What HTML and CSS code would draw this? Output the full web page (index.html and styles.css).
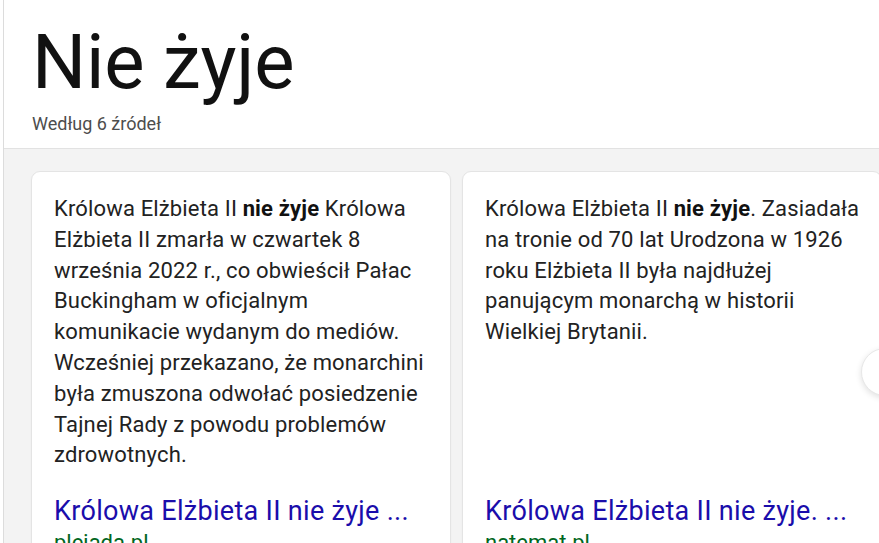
FILE: index.html
```html
<!DOCTYPE html>
<html lang="pl">
<head>
<meta charset="utf-8">
<link rel="stylesheet" href="styles.css">
</head>
<body>
<div class="panel">
  <header class="head">
    <h1 class="answer">Nie żyje</h1>
    <div class="sources">Według 6 źródeł</div>
  </header>
  <section class="strip">
    <article class="card">
      <p class="snippet">Królowa Elżbieta II <b>nie żyje</b> Królowa Elżbieta II zmarła w czwartek 8 września 2022 r., co obwieścił Pałac Buckingham w oficjalnym komunikacie wydanym do mediów. Wcześniej przekazano, że monarchini była zmuszona odwołać posiedzenie Tajnej Rady z powodu problemów zdrowotnych.</p>
      <a class="title" href="#">Królowa Elżbieta II nie żyje ...</a>
      <div class="site">plejada.pl</div>
    </article>
    <article class="card">
      <p class="snippet">Królowa Elżbieta II <b>nie żyje</b>. Zasiadała na tronie od 70 lat Urodzona w 1926 roku Elżbieta II była najdłużej panującym monarchą w historii Wielkiej Brytanii.</p>
      <a class="title" href="#">Królowa Elżbieta II nie żyje. ...</a>
      <div class="site">natemat.pl</div>
    </article>
    <button class="next" aria-label="Dalej">
      <svg width="20" height="20" viewBox="0 0 20 20"><path d="M6 2 L14 10 L6 18" fill="none" stroke="#444" stroke-width="2"/></svg>
    </button>
  </section>
</div>
</body>
</html>
```
FILE: styles.css
```css
html, body {
  margin: 0;
  padding: 0;
  background: #ffffff;
  overflow: hidden;
}
body {
  font-family: Roboto, "Liberation Sans", Arial, sans-serif;
  width: 879px;
  height: 543px;
}
.panel {
  margin-left: 3px;
  border-left: 1px solid #dcdcdc;
  height: 543px;
  display: flex;
  flex-direction: column;
}
.head {
  padding: 18px 0 0 28px;
  box-sizing: content-box;
  height: 130px;
  border-bottom: 1px solid #e2e2e2;
}
.answer {
  margin: 0;
  font-size: 76px;
  font-weight: 400;
  line-height: 89px;
  color: #111111;
  letter-spacing: -0.2px;
}
.sources {
  margin-top: 6px;
  font-size: 18px;
  line-height: 22px;
  color: #4d4d4d;
}
.strip {
  flex: 1;
  background: #f3f3f3;
  position: relative;
  display: flex;
  gap: 11px;
  padding: 22px 0 0 27px;
  overflow: hidden;
}
.card {
  flex: 0 0 420px;
  box-sizing: border-box;
  height: 420px;
  background: #fff;
  border: 1px solid #e4e4e4;
  border-radius: 9px;
  box-shadow: 0 1px 2px rgba(0,0,0,0.04);
  padding: 22px 18px 0 22px;
  display: flex;
  flex-direction: column;
}
.snippet {
  margin: 0;
  font-size: 22px;
  line-height: 30.8px;
  letter-spacing: 0.15px;
  color: #222222;
  flex: 0 0 277px;
}
.snippet b {
  font-weight: 700;
  color: #111;
}
.title {
  margin-top: 24px;
  font-size: 27px;
  line-height: 32px;
  letter-spacing: 0.3px;
  color: #1a0dab;
  text-decoration: none;
  white-space: nowrap;
}
.site {
  margin-top: 3px;
  font-size: 22px;
  line-height: 26px;
  color: #006621;
}
.next {
  position: absolute;
  left: 857px;
  top: 199px;
  width: 48px;
  height: 48px;
  border-radius: 50%;
  border: 1px solid #e8e8e8;
  background: #fff;
  box-shadow: 0 2px 6px rgba(0,0,0,0.12);
  padding: 0 0 0 12px;
  display: flex;
  align-items: center;
  justify-content: flex-start;
}
```
